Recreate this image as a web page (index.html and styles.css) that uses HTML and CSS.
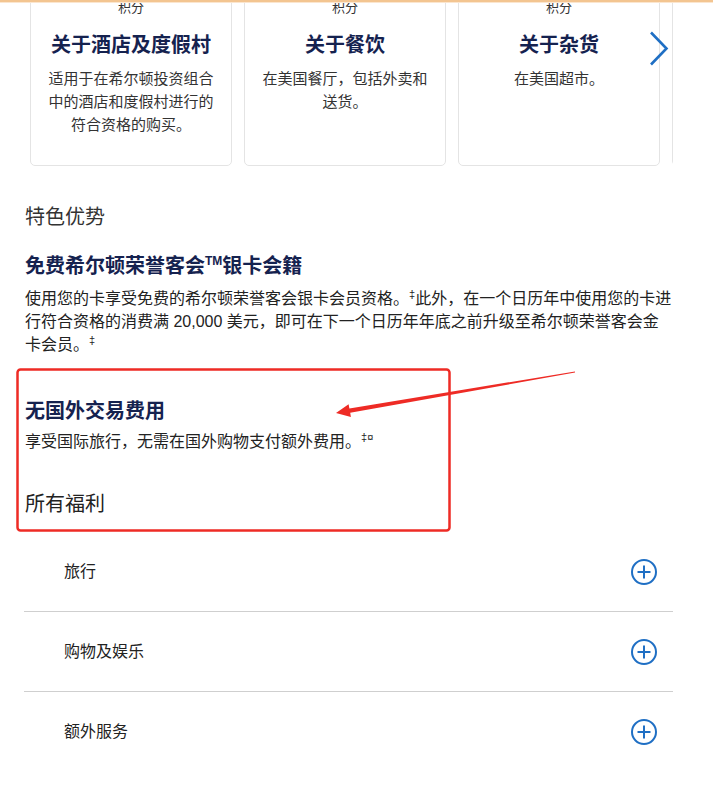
FILE: index.html
```html
<!DOCTYPE html>
<html lang="zh-CN">
<head>
  <meta charset="UTF-8">
  <meta name="viewport" content="width=device-width, initial-scale=1.0">
  <title>希尔顿荣誉客会 卡片福利</title>
  <link rel="stylesheet" href="styles.css">
</head>
<body>
  <div class="top-line"></div>

  <!-- 积分卡片轮播 -->
  <div class="carousel-wrap">
    <div class="carousel">
      <div class="card">
        <div class="card-label">积分</div>
        <h3 class="card-title">关于酒店及度假村</h3>
        <p class="card-text">适用于在希尔顿投资组合中的酒店和度假村进行的符合资格的购买。</p>
      </div>
      <div class="card">
        <div class="card-label">积分</div>
        <h3 class="card-title">关于餐饮</h3>
        <p class="card-text">在美国餐厅，包括外卖和送货。</p>
      </div>
      <div class="card">
        <div class="card-label">积分</div>
        <h3 class="card-title">关于杂货</h3>
        <p class="card-text">在美国超市。</p>
      </div>
      <!-- 下一张卡片只露出边框 -->
      <div class="card card-peek"></div>
    </div>
    <button class="next-btn" aria-label="下一个">
      <svg width="20" height="36" viewBox="0 0 20 36"><path d="M2 1.5 L17.5 17.5 L2 33.5" fill="none" stroke="#1f6fc4" stroke-width="2.6"/></svg>
    </button>
  </div>

  <!-- 特色优势 -->
  <div class="content">
    <h2 class="section-title">特色优势</h2>

    <h3 class="benefit-title">免费希尔顿荣誉客会<sup>TM</sup>银卡会籍</h3>
    <p class="benefit-text">使用您的卡享受免费的希尔顿荣誉客会银卡会员资格。<sup>‡</sup>此外，在一个日历年中使用您的卡进行符合资格的消费满 20,000 美元，即可在下一个日历年年底之前升级至希尔顿荣誉客会金卡会员。<sup>‡</sup></p>

    <h3 class="benefit-title second">无国外交易费用</h3>
    <p class="benefit-text">享受国际旅行，无需在国外购物支付额外费用。<sup>‡¤</sup></p>

    <h2 class="section-title all">所有福利</h2>

    <div class="accordion">
      <div class="acc-row">
        <span>旅行</span>
        <svg class="plus" width="28" height="28" viewBox="0 0 28 28"><circle cx="14" cy="14" r="12" fill="none" stroke="#1f6fc4" stroke-width="2"/><path d="M14 7.5v13M7.5 14h13" stroke="#1f6fc4" stroke-width="2"/></svg>
      </div>
      <div class="acc-row">
        <span>购物及娱乐</span>
        <svg class="plus" width="28" height="28" viewBox="0 0 28 28"><circle cx="14" cy="14" r="12" fill="none" stroke="#1f6fc4" stroke-width="2"/><path d="M14 7.5v13M7.5 14h13" stroke="#1f6fc4" stroke-width="2"/></svg>
      </div>
      <div class="acc-row">
        <span>额外服务</span>
        <svg class="plus" width="28" height="28" viewBox="0 0 28 28"><circle cx="14" cy="14" r="12" fill="none" stroke="#1f6fc4" stroke-width="2"/><path d="M14 7.5v13M7.5 14h13" stroke="#1f6fc4" stroke-width="2"/></svg>
      </div>
    </div>
  </div>

  <!-- 红色标注 -->
  <svg class="markup" width="713" height="786" viewBox="0 0 713 786">
    <rect x="17.5" y="369.5" width="432" height="161" rx="3" fill="none" stroke="#ee2b25" stroke-width="2.5"/>
    <polygon points="575,371.4 349.4,408.4 348.6,404.2 336,413 350.9,417 350.2,412.8 575,372.6" fill="#ee2b25"/>
  </svg>
</body>
</html>
```

FILE: styles.css
```css
body {
  margin: 0;
  position: relative;
  font-family: "Liberation Sans", "Noto Sans CJK SC", sans-serif;
  color: #222;
  background: #fff;
}

.top-line {
  position: fixed;
  top: 0;
  left: 0;
  right: 0;
  height: 2px;
  background: #f3c591;
  border-bottom: 1px solid #fbe6cf;
  z-index: 10;
}

/* 卡片轮播 */
.carousel-wrap {
  position: relative;
  margin: -20px 40px 0 24px;
}

.carousel {
  display: flex;
  gap: 12px;
  padding-left: 6px;
  overflow: hidden;
}

.card {
  flex: 0 0 202px;
  box-sizing: border-box;
  border: 1px solid #e4e4e4;
  border-radius: 5px;
  padding: 18px 14px 29px;
  text-align: center;
}

.card-label {
  font-size: 13px;
  line-height: 18px;
  color: #333;
}

.card-title {
  margin: 14px 0 0;
  font-size: 20px;
  line-height: 28px;
  font-weight: bold;
  color: #15224f;
}

.card-text {
  margin: 8px 0 0;
  font-size: 15px;
  line-height: 23px;
  color: #333;
}

.next-btn {
  position: absolute;
  top: 51px;
  left: 625px;
  padding: 0;
  border: none;
  background: none;
  cursor: pointer;
}

/* 内容区 */
.content {
  margin: 0 40px 0 24px;
}

.section-title {
  margin: 37px 0 0 1px;
  font-size: 20px;
  line-height: 28px;
  font-weight: normal;
  color: #333;
}

.section-title.all {
  margin-top: 37px;
  color: #222;
}

.benefit-title {
  margin: 21px 0 0 1px;
  font-size: 20px;
  line-height: 28px;
  font-weight: bold;
  color: #15224f;
}

.benefit-title.second {
  margin-top: 41px;
}

.benefit-title sup {
  font-size: 12px;
  line-height: 0;
  vertical-align: 8px;
}

.benefit-text {
  margin: 7px 0 0 1px;
  font-size: 16px;
  line-height: 23px;
  color: #222;
}

.benefit-text sup {
  font-size: 11px;
  line-height: 0;
  vertical-align: 6px;
}

.benefit-title.second + .benefit-text {
  margin-top: 5px;
}

/* 手风琴 */
.accordion {
  margin-top: 14px;
}

.acc-row {
  display: flex;
  align-items: center;
  justify-content: space-between;
  height: 79px;
  padding: 0 15px 0 40px;
  border-bottom: 1px solid #cfcfcf;
  font-size: 16px;
  color: #222;
}

.acc-row span {
  margin-top: -3px;
}

.acc-row:last-child {
  border-bottom: none;
}

.markup {
  position: absolute;
  top: 0;
  left: 0;
  pointer-events: none;
}
```
